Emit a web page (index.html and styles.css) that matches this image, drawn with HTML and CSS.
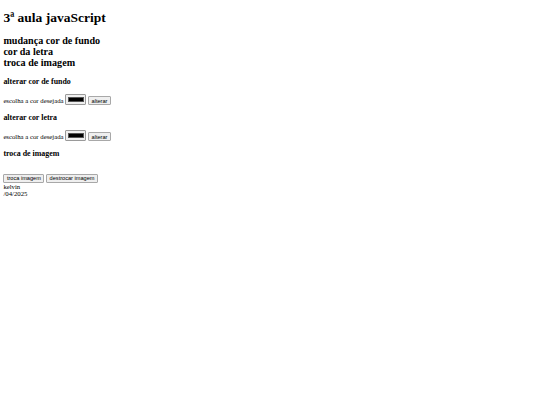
FILE: index.html
```html
<!DOCTYPE html>
<html lang="pt-br">
<head>
<meta charset="utf-8">
<title>3ª aula javaScript</title>
<link rel="stylesheet" href="styles.css">
</head>
<body class="page">
<h1 class="title">3ª aula javaScript</h1>
<h2 class="subtitle">mudança cor de fundo<br>cor da letra<br>troca de imagem</h2>
<h3 class="section">alterar cor de fundo</h3>
<p class="row">escolha a cor desejada <span class="color"><span class="swatch"></span></span> <button class="btn">alterar</button></p>
<h3 class="section">alterar cor letra</h3>
<p class="row">escolha a cor desejada <span class="color"><span class="swatch"></span></span> <button class="btn">alterar</button></p>
<h3 class="section">troca de imagem</h3>
<div class="imgbox"></div>
<div class="buttons"><button class="btn">troca imagem</button> <button class="btn">destrocar imagem</button></div>
<div class="footer">kelvin<br>/04/2025</div>
</body>
</html>
```

FILE: styles.css
```css
html { background: #fff; }
.page {
  margin: 3.375px;
  font-family: "Liberation Serif", "Times New Roman", serif;
  font-size: 6.75px;
  color: #000;
}
.title { font-size: 13.5px; margin: 7px 0 9.05px; }
.subtitle { font-size: 10.125px; margin: 8.4px 0; }
.section { font-size: 7.9px; margin: 7.9px 0; }
.row { margin: 6.75px 0; }
.color {
  display: inline-block;
  vertical-align: bottom;
  box-sizing: border-box;
  width: 21.1px;
  height: 11.4px;
  padding: 2px 1.8px;
  border: 1px solid #9a9a9a;
  border-radius: 1px;
  background: #efefef;
}
.swatch {
  display: block;
  height: 100%;
  background: #000;
  box-sizing: border-box;
  border: 1px solid #555;
}
.btn {
  font-family: "Liberation Sans", Arial, sans-serif;
  font-size: 5.625px;
  padding: 0.42px 2.53px;
  margin: 0;
  border: 1px solid #a8a8a8;
  border-radius: 1px;
  background: #efefef;
  color: #000;
}
.imgbox { height: 7.76px; }
```
